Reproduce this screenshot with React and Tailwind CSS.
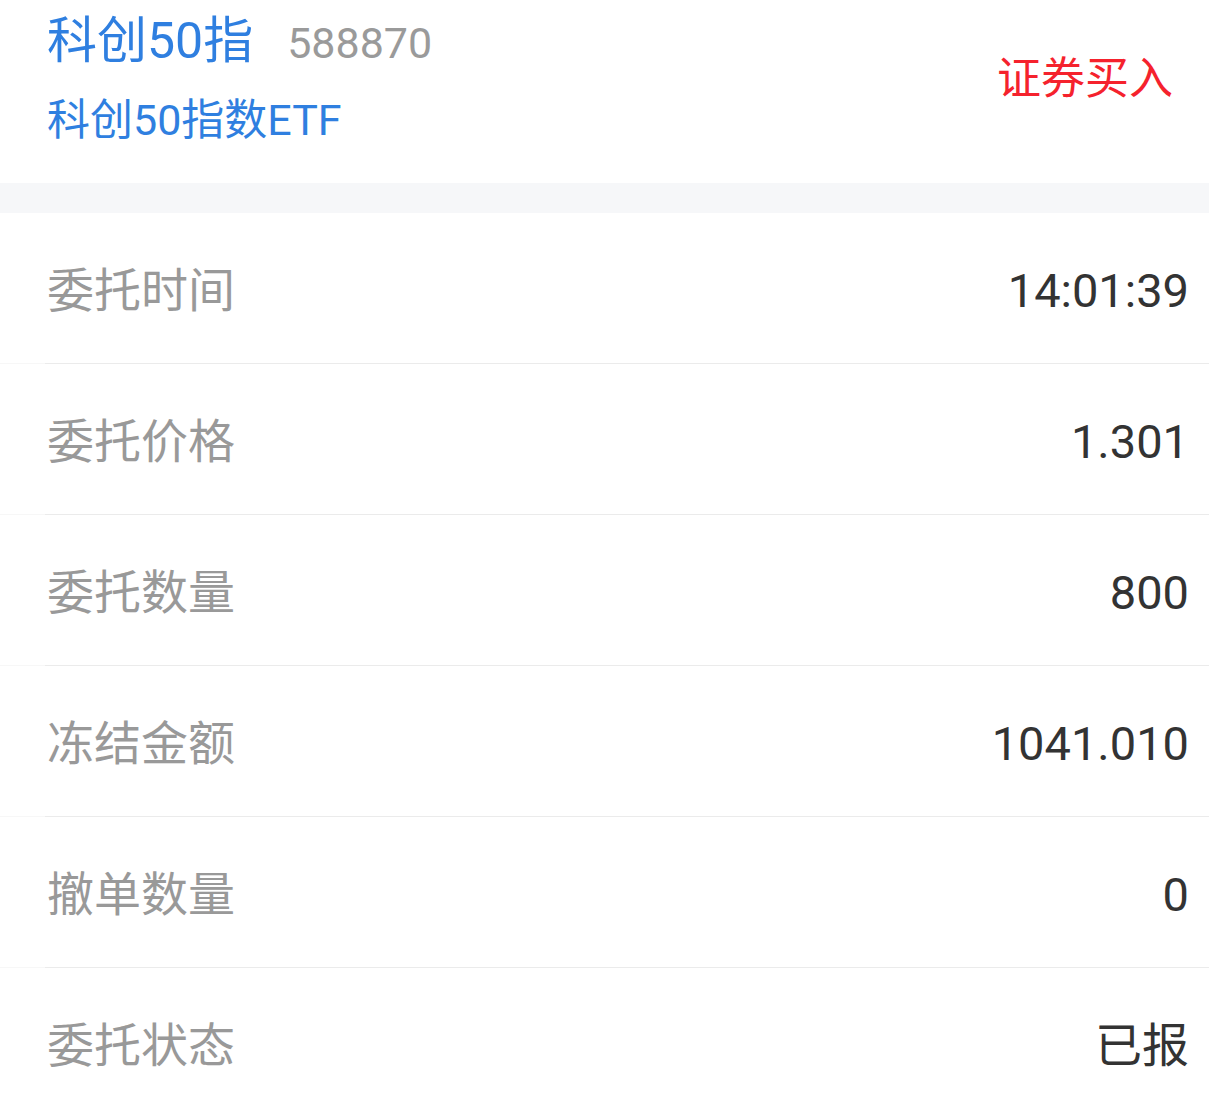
import React from "react";

const rows = [
  ["委托时间", "14:01:39"],
  ["委托价格", "1.301"],
  ["委托数量", "800"],
  ["冻结金额", "1041.010"],
  ["撤单数量", "0"],
  ["委托状态", "已报"],
];

export default function App() {
  return (
    <div
      className="w-[1209px] h-[1095px] overflow-hidden bg-white"
      style={{ fontFamily: 'Roboto, "Noto Sans CJK SC", "Noto Sans", sans-serif' }}
    >
      <div className="h-[183px] flex justify-between">
        <div className="pl-[47px] pt-[10px]">
          <div className="flex items-baseline">
            <span className="text-[50px] leading-[62px] text-[#2f7fe0]">科创50指</span>
            <span className="ml-[34px] text-[43px] leading-[62px] text-[#9a9a9a]">588870</span>
          </div>
          <div className="mt-[20px] text-[43px] leading-[52px] text-[#2f7fe0]">科创50指数ETF</div>
        </div>
        <div className="pr-[36px] pt-[49px]">
          <span className="text-[44px] leading-[60px] text-[#f5222d]">证券买入</span>
        </div>
      </div>
      <div className="h-[30px] bg-[#f6f7f9]" />
      {rows.map(([label, value], i) => (
        <div key={label}>
          <div className="h-[150px] flex items-center justify-between pl-[47px] pr-[20px] pt-[6px]">
            <span className="text-[47px] leading-[60px] text-[#999999]">{label}</span>
            <span className="text-[47px] leading-[60px] text-[#333333]">{value}</span>
          </div>
          {i < rows.length - 1 && (
            <div className="h-px bg-[#f7f7f7]">
              <div className="ml-[45px] h-px bg-[#ebebeb]" />
            </div>
          )}
        </div>
      ))}
    </div>
  );
}
